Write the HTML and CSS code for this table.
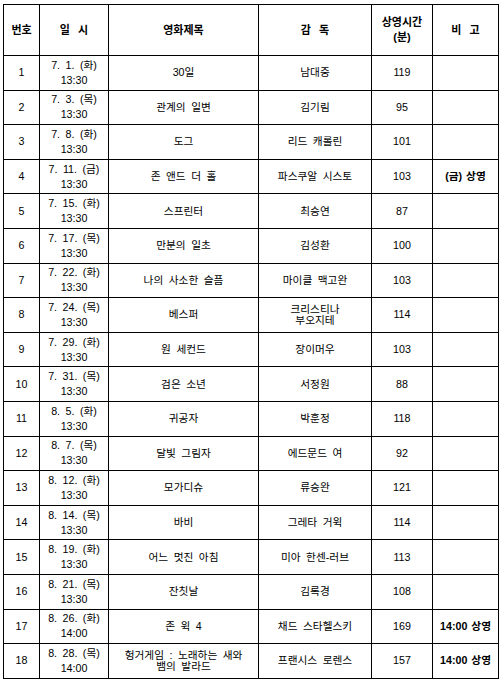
FILE: index.html
```html
<!DOCTYPE html>
<html lang="ko">
<head>
<meta charset="utf-8">
<link rel="stylesheet" href="styles.css">
</head>
<body>
<table class="schedule">
  <colgroup>
    <col class="c-no"><col class="c-date"><col class="c-title"><col class="c-dir"><col class="c-time"><col class="c-note">
  </colgroup>
  <thead>
    <tr class="head">
      <th>번호</th><th>일&nbsp;&nbsp;시</th><th>영화제목</th><th>감&nbsp;&nbsp;독</th><th>상영시간<br>(분)</th><th>비&nbsp;&nbsp;고</th>
    </tr>
  </thead>
  <tbody>
    <tr><td>1</td><td>7. 1. (화)<br>13:30</td><td>30일</td><td>남대중</td><td>119</td><td></td></tr>
    <tr><td>2</td><td>7. 3. (목)<br>13:30</td><td>관계의 일변</td><td>김기림</td><td>95</td><td></td></tr>
    <tr><td>3</td><td>7. 8. (화)<br>13:30</td><td>도그</td><td>리드 캐롤린</td><td>101</td><td></td></tr>
    <tr><td>4</td><td>7. 11. (금)<br>13:30</td><td>존 앤드 더 홀</td><td>파스쿠알 시스토</td><td>103</td><td class="bold">(금) 상영</td></tr>
    <tr><td>5</td><td>7. 15. (화)<br>13:30</td><td>스프린터</td><td>최승연</td><td>87</td><td></td></tr>
    <tr><td>6</td><td>7. 17. (목)<br>13:30</td><td>만분의 일초</td><td>김성환</td><td>100</td><td></td></tr>
    <tr><td>7</td><td>7. 22. (화)<br>13:30</td><td>나의 사소한 슬픔</td><td>마이클 맥고완</td><td>103</td><td></td></tr>
    <tr><td>8</td><td>7. 24. (목)<br>13:30</td><td>베스퍼</td><td class="tight">크리스티나<br>부오지테</td><td>114</td><td></td></tr>
    <tr><td>9</td><td>7. 29. (화)<br>13:30</td><td>원 세컨드</td><td>장이머우</td><td>103</td><td></td></tr>
    <tr><td>10</td><td>7. 31. (목)<br>13:30</td><td>검은 소년</td><td>서정원</td><td>88</td><td></td></tr>
    <tr><td>11</td><td>8. 5. (화)<br>13:30</td><td>귀공자</td><td>박훈정</td><td>118</td><td></td></tr>
    <tr><td>12</td><td>8. 7. (목)<br>13:30</td><td>달빛 그림자</td><td>에드문드 여</td><td>92</td><td></td></tr>
    <tr><td>13</td><td>8. 12. (화)<br>13:30</td><td>모가디슈</td><td>류승완</td><td>121</td><td></td></tr>
    <tr><td>14</td><td>8. 14. (목)<br>13:30</td><td>바비</td><td>그레타 거윅</td><td>114</td><td></td></tr>
    <tr><td>15</td><td>8. 19. (화)<br>13:30</td><td>어느 멋진 아침</td><td>미아 한센-러브</td><td>113</td><td></td></tr>
    <tr><td>16</td><td>8. 21. (목)<br>13:30</td><td>잔칫날</td><td>김록경</td><td>108</td><td></td></tr>
    <tr><td>17</td><td>8. 26. (화)<br>14:00</td><td>존 윅 4</td><td>채드 스타헬스키</td><td>169</td><td class="bold">14:00 상영</td></tr>
    <tr><td>18</td><td>8. 28. (목)<br>14:00</td><td class="tight">헝거게임 : 노래하는 새와<br>뱀의 발라드</td><td>프랜시스 로렌스</td><td>157</td><td class="bold">14:00 상영</td></tr>
  </tbody>
</table>
</body>
</html>
```
FILE: styles.css
```css
html, body {
  margin: 0;
  padding: 0;
  background: #fff;
}
body {
  padding: 4px 0 0 3px;
  font-family: "Liberation Sans", "Noto Sans CJK KR", sans-serif;
  font-size: 10.7px;
  color: #000;
}
.schedule {
  border-collapse: collapse;
  table-layout: fixed;
  width: 495px;
}
.c-no { width: 36px; }
.c-date { width: 69px; }
.c-title { width: 150px; }
.c-dir { width: 113px; }
.c-time { width: 61px; }
.c-note { width: 66px; }
.schedule th,
.schedule td {
  border: 1px solid #000;
  padding: 0 1px;
  text-align: center;
  vertical-align: middle;
  line-height: 15px;
  white-space: nowrap;
  word-spacing: 2.5px;
}
.schedule th {
  font-weight: bold;
  font-size: 11px;
  word-spacing: 1px;
}
.head { height: 51px; }
.schedule tbody tr { height: 34.6px; }
.bold { font-weight: bold; word-spacing: 1px !important; }
.tight { line-height: 11px !important; }
```
